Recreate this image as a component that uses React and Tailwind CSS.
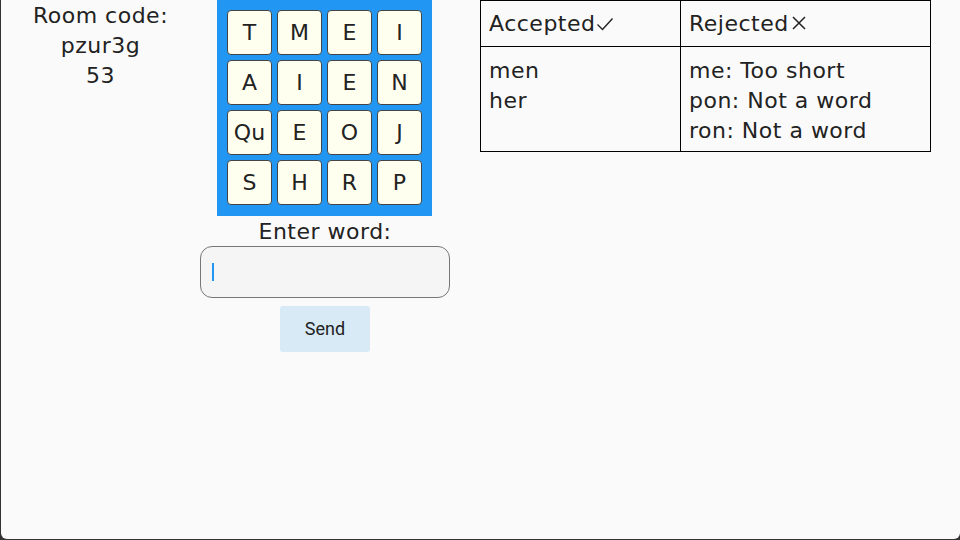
import React from 'react';

const board = [
    ['T', 'M', 'E', 'I'],
    ['A', 'I', 'E', 'N'],
    ['Qu', 'E', 'O', 'J'],
    ['S', 'H', 'R', 'P'],
];

const accepted = ['men', 'her'];
const rejected = ['me: Too short', 'pon: Not a word', 'ron: Not a word'];

function Check() {
    return (
        <svg width="18" height="16" viewBox="0 0 18 16" className="inline-block ml-[1px] mb-[2px]">
            <path d="M1.5 8.5 L6.5 13.5 L16.5 2.5" fill="none" stroke="#222" strokeWidth="1.4" />
        </svg>
    );
}

function Cross() {
    return (
        <svg width="16" height="16" viewBox="0 0 16 16" className="inline-block ml-[2px] mb-[3px]">
            <path d="M2 2 L14 14 M14 2 L2 14" fill="none" stroke="#222" strokeWidth="1.5" />
        </svg>
    );
}

export default function App() {
    return (
        <div className="w-[960px] h-[540px] bg-[#333] overflow-hidden">
            <div
                className="h-[539px] ml-px bg-[#fafafa] rounded-b-[6px] flex text-[#222] text-[22px] leading-[30px] tracking-[0.5px]"
                style={{ fontFamily: '"DejaVu Sans", "Noto Sans", sans-serif' }}
            >
                {/* room info */}
                <div className="w-[199px] flex flex-col items-center pt-[1px]">
                    <div>Room code:</div>
                    <div>pzur3g</div>
                    <div>53</div>
                </div>

                {/* board + input */}
                <div className="w-[250px] flex flex-col items-center">
                    <div className="self-start ml-[17px] w-[215px] bg-[#2196f3] pt-[10px] px-[10px] pb-[11px] grid grid-cols-4 gap-[5px]">
                        {board.flat().map((letter, i) => (
                            <div
                                key={i}
                                className="h-[45px] bg-[#fffff0] border border-[#444] rounded-[4px] flex items-center justify-center pt-[1px] tracking-normal"
                            >
                                {letter}
                            </div>
                        ))}
                    </div>
                    <div className="h-[30px] pt-[2px] leading-[28px]">Enter word:</div>
                    <div className="w-[250px] h-[52px] rounded-[12px] border border-[#777] bg-[#f5f5f5] flex items-center px-[11px]">
                        <div className="w-[2px] h-[18px] bg-[#2196f3]" />
                    </div>
                    <button
                        className="mt-[8px] w-[90px] h-[46px] bg-[#d7eaf6] rounded-[3px] text-[18px] text-[#222] tracking-normal"
                        style={{ fontFamily: 'Roboto, sans-serif' }}
                    >
                        Send
                    </button>
                </div>

                {/* results table */}
                <div className="ml-[30px]">
                    <table className="w-[451px] border border-black border-collapse">
                        <thead>
                            <tr className="h-[46px]">
                                <th className="w-[200px] border border-black text-left font-normal px-[8px]">
                                    Accepted<Check />
                                </th>
                                <th className="border border-black text-left font-normal px-[8px]">
                                    Rejected<Cross />
                                </th>
                            </tr>
                        </thead>
                        <tbody>
                            <tr>
                                <td className="border border-black align-top px-[8px] pt-[9px] pb-[5px]">
                                    {accepted.map((w) => (
                                        <div key={w}>{w}</div>
                                    ))}
                                </td>
                                <td className="border border-black align-top px-[8px] pt-[9px] pb-[5px]">
                                    {rejected.map((w) => (
                                        <div key={w}>{w}</div>
                                    ))}
                                </td>
                            </tr>
                        </tbody>
                    </table>
                </div>
            </div>
        </div>
    );
}
